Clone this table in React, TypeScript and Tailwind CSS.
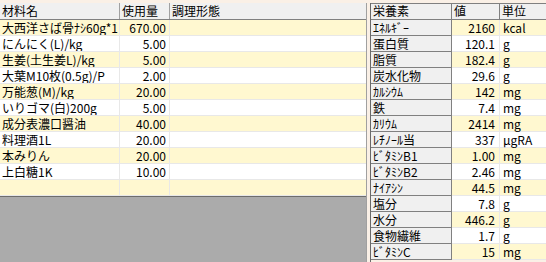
import React from 'react';

type Ingredient = { name: string; qty: string };
type Nutrient = { name: string; value: string; unit: string };

const INGREDIENTS: Ingredient[] = [
    { name: '大西洋さば骨ﾅｼ60g*1', qty: '670.00' },
    { name: 'にんにく(L)/kg', qty: '5.00' },
    { name: '生姜(土生姜L)/kg', qty: '5.00' },
    { name: '大葉M10枚(0.5g)/P', qty: '2.00' },
    { name: '万能葱(M)/kg', qty: '20.00' },
    { name: 'いりゴマ(白)200g', qty: '5.00' },
    { name: '成分表濃口醤油', qty: '40.00' },
    { name: '料理酒1L', qty: '20.00' },
    { name: '本みりん', qty: '20.00' },
    { name: '上白糖1K', qty: '10.00' },
    { name: '', qty: '' },
];

const NUTRIENTS: Nutrient[] = [
    { name: 'ｴﾈﾙｷﾞｰ', value: '2160', unit: 'kcal' },
    { name: '蛋白質', value: '120.1', unit: 'g' },
    { name: '脂質', value: '182.4', unit: 'g' },
    { name: '炭水化物', value: '29.6', unit: 'g' },
    { name: 'ｶﾙｼｳﾑ', value: '142', unit: 'mg' },
    { name: '鉄', value: '7.4', unit: 'mg' },
    { name: 'ｶﾘｳﾑ', value: '2414', unit: 'mg' },
    { name: 'ﾚﾁﾉｰﾙ当', value: '337', unit: 'μgRA' },
    { name: 'ﾋﾞﾀﾐﾝB1', value: '1.00', unit: 'mg' },
    { name: 'ﾋﾞﾀﾐﾝB2', value: '2.46', unit: 'mg' },
    { name: 'ﾅｲｱｼﾝ', value: '44.5', unit: 'mg' },
    { name: '塩分', value: '7.8', unit: 'g' },
    { name: '水分', value: '446.2', unit: 'g' },
    { name: '食物繊維', value: '1.7', unit: 'g' },
    { name: 'ﾋﾞﾀﾐﾝC', value: '15', unit: 'mg' },
];

const App: React.FC = () => {
    return (
        <div
            className="w-[546px] h-[262px] overflow-hidden bg-[#faf0e6] pt-[3px] flex text-[12px] leading-[15px] text-black"
            style={{ fontFamily: '"Noto Sans CJK JP", "Noto Sans", sans-serif' }}
        >
            {/* 材料 grid */}
            <div className="w-[367px] flex flex-col border-r border-[#a0a0a0]">
                <div className="flex h-[17px] leading-[15px] bg-[#f0f0f0] border-b border-[#808080]">
                    <div className="w-[120px] pl-[2px] border-r border-[#a0a0a0]">材料名</div>
                    <div className="w-[50px] pl-[2px] border-r border-[#a0a0a0]">使用量</div>
                    <div className="flex-1 pl-[2px]">調理形態</div>
                </div>
                {INGREDIENTS.map((item, i) => (
                    <div
                        key={i}
                        className={`flex h-[16px] border-b border-[#e8e8e8] ${i % 2 === 0 ? 'bg-[#fff8d0]' : 'bg-white'}`}
                    >
                        <div className="w-[120px] pl-[2px] border-r border-[#e8e8e8] whitespace-nowrap overflow-hidden">{item.name}</div>
                        <div className="w-[50px] pr-[3px] text-right border-r border-[#e8e8e8]">{item.qty}</div>
                        <div className="flex-1"></div>
                    </div>
                ))}
                <div className="flex-1 bg-[#ababab] border-t border-[#6d6d6d]"></div>
            </div>

            {/* 栄養素 grid */}
            <div className="ml-[3px] flex-1 flex flex-col border-l border-[#696969] overflow-hidden">
                <div className="flex h-[17px] leading-[14px] bg-[#f0f0f0] border-t border-b border-[#808080]">
                    <div className="w-[81px] pl-[2px] border-r border-[#808080]">栄養素</div>
                    <div className="w-[48px] pl-[2px] border-r border-[#808080]">値</div>
                    <div className="flex-1 pl-[2px] whitespace-nowrap">単位</div>
                </div>
                {NUTRIENTS.map((n, i) => (
                    <div key={n.name} className="flex h-[16px]">
                        <div className="w-[81px] pl-[2px] bg-[#f0f0f0] border-r border-b border-[#808080] whitespace-nowrap">{n.name}</div>
                        <div
                            className={`w-[48px] pr-[4px] text-right border-r border-b border-[#e8e8e8] ${i % 2 === 0 ? 'bg-[#fff8d0]' : 'bg-white'}`}
                        >
                            {n.value}
                        </div>
                        <div
                            className={`flex-1 pl-[3px] border-b border-[#e8e8e8] whitespace-nowrap ${i % 2 === 0 ? 'bg-[#fff8d0]' : 'bg-white'}`}
                        >
                            {n.unit}
                        </div>
                    </div>
                ))}
            </div>
        </div>
    );
};

export default App;
